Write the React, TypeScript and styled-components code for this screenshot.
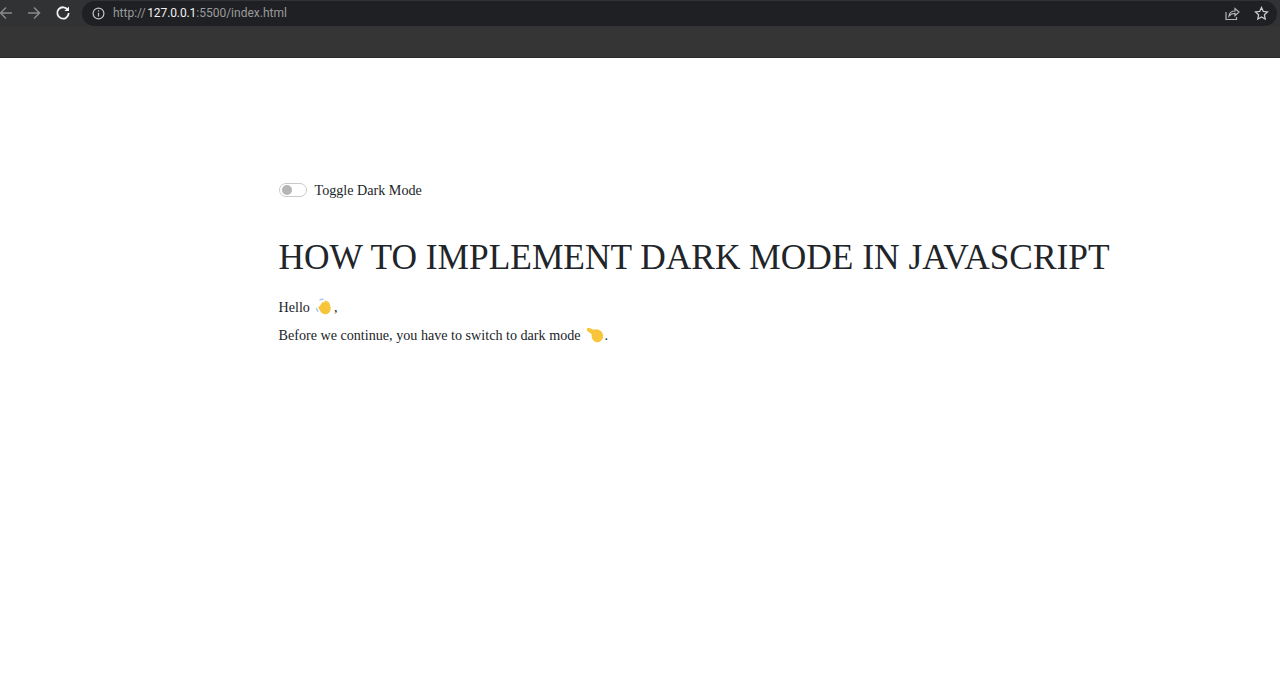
import React from "react";
import styled, { createGlobalStyle } from "styled-components";

const Global = createGlobalStyle`
  html, body { margin: 0; padding: 0; background: #fff; }
  body { font-family: "Liberation Serif", "Times New Roman", serif; color: #212529; overflow: hidden; }
`;

const Page = styled.div`
  width: 1280px;
  height: 675px;
  display: flex;
  flex-direction: column;
`;

const BrowserChrome = styled.header`
  height: 58px;
  flex: none;
  box-sizing: border-box;
  background: #353535;
  border-bottom: 1px solid #2a2a2a;
`;

const Toolbar = styled.div`
  height: 26px;
  display: flex;
  align-items: center;
  padding-right: 3px;
  background: #313234;
`;

const NavButton = styled.button<{ $w: number }>`
  width: ${(p) => p.$w}px;
  height: 26px;
  flex: none;
  border: 0;
  padding: 0;
  background: none;
  display: flex;
  align-items: center;
  justify-content: center;
`;

const AddressBar = styled.div`
  flex: 1;
  height: 25px;
  margin-left: 10px;
  padding: 0 8px 0 10px;
  display: flex;
  align-items: center;
  background: #1f2023;
  border-radius: 13px;
`;

const Url = styled.span`
  margin-left: 8px;
  font: 12px "Roboto", "Liberation Sans", sans-serif;
  color: #9a9b9d;
  flex: 1;
`;

const Host = styled.span`
  margin-left: 1.5px;
  letter-spacing: -0.1px;
  color: #f1f1f1;
`;

const BarIcons = styled.div`
  display: flex;
  align-items: center;
  gap: 14px;
`;

const Content = styled.main`
  flex: 1;
  padding: 123px 0 0 278.5px;
  font-size: 14.14px;
  line-height: 22px;
`;

const ToggleRow = styled.label`
  height: 17px;
  display: flex;
  align-items: center;
  gap: 8px;
`;

const Track = styled.span`
  width: 28px;
  height: 14px;
  box-sizing: border-box;
  padding-left: 2px;
  border: 1px solid #c9c9c9;
  border-radius: 8px;
  display: flex;
  align-items: center;
  background: #fff;
`;

const Knob = styled.span`
  width: 10px;
  height: 10px;
  border-radius: 50%;
  background: #b5b5b5;
`;

const Title = styled.h1`
  margin: 38px 0 0;
  font-size: 35.36px;
  font-weight: 400;
  line-height: 43px;
  white-space: nowrap;
`;

const Paragraph = styled.p<{ $top: number }>`
  margin: ${(p) => p.$top}px 0 0;
  height: 22px;
  display: flex;
  align-items: center;
  white-space: pre;
`;

const Emoji = styled.svg`
  width: 18px;
  height: 18px;
  margin: 0 1px 0 5px;
  flex: none;
`;

const WaveHand = () => (
  <Emoji viewBox="0 0 18 18">
    <path d="M1.500 10.500c.2 1 .7 1.900 1.500 2.700M5 1.800c.9-.5 2-.6 3-.3" stroke="#a9c8ea" strokeWidth="1.400" fill="none" strokeLinecap="round" />
    <path d="M4.500 8.500 7.300 4.300c.5-.8 1.500-.3 1.400.5L9.800 3c.5-.8 1.600-.3 1.400.6l.3-.3c.7-.5 1.500.1 1.300.9l.3-.1c.8-.2 1.200.5 1.100 1.200 1.100 1.900 1.800 4 1.400 6.200-.6 3.300-3 5.200-5.800 4.700-2.300-.3-3.900-1.700-4.900-3.700L3.500 9.800c-.5-.8.500-1.800 1-1.300z" fill="#f8c53a" />
  </Emoji>
);

const PointHand = () => (
  <Emoji viewBox="0 0 18 18">
    <path d="M.8 3.200C1.100 2 2.400 1.600 3.500 2.100L7.800 3.800c1.100-.7 2.500-.8 3.900-.4 2.100.6 3.800 1.700 4.700 3.500 1 2.100.9 4.500-.2 6.400-1.200 2.100-3.300 3.200-5.600 2.900-2.300-.3-4-1.900-4.700-4.100-.4-1.300-.4-2.600-.2-3.800L2 5.500C1.100 5.100.6 4.100.8 3.200z" fill="#f8c53a" />
  </Emoji>
);

export default function App() {
  return (
    <Page>
      <Global />
      <BrowserChrome>
        <Toolbar>
          <NavButton $w={14}>
            <svg width="14" height="14" viewBox="0 0 14 14" fill="none" stroke="#8a8b8d" strokeWidth="1.500" style={{ marginLeft: -3 }}>
              <path d="M13 7H1.500M7 1.500 1.500 7 7 12.500" />
            </svg>
          </NavButton>
          <NavButton $w={40}>
            <svg width="14" height="14" viewBox="0 0 14 14" fill="none" stroke="#8a8b8d" strokeWidth="1.500">
              <path d="M1 7h11.500M7 1.500 12.500 7 7 12.500" />
            </svg>
          </NavButton>
          <NavButton $w={18}>
            <svg width="16" height="16" viewBox="0 0 16 16" fill="none" stroke="#f4f4f4" strokeWidth="1.800">
              <path d="M13 5.200A5.700 5.700 0 1 0 13.700 8" />
              <path d="M14 1.500v4.600H9.400z" fill="#f4f4f4" stroke="none" />
            </svg>
          </NavButton>
          <AddressBar>
            <svg width="13" height="13" viewBox="0 0 13 13" fill="none" stroke="#c4c5c7" strokeWidth="1.200">
              <circle cx="6.500" cy="6.500" r="5.400" />
              <path d="M6.500 5.700v3.800M6.500 3.300v1.300" />
            </svg>
            <Url>
              http://<Host>127.0.0.1</Host>:5500/index.html
            </Url>
            <BarIcons>
              <svg width="15" height="15" viewBox="0 0 15 15" fill="none" stroke="#b4b5b7" strokeWidth="1.200">
                <path d="M1 6v7.500h10.500V11" />
                <path d="M4 10c.4-3 2.500-5 6-5V2.500L14 6l-4 3.700V7.400C7.500 7.400 5.500 8.200 4 10z" />
              </svg>
              <svg width="15" height="15" viewBox="0 0 15 15" fill="none" stroke="#c8c9cb" strokeWidth="1.300">
                <path d="m7.500 1.500 1.800 3.900 4.200.5-3.100 2.900.8 4.200-3.700-2.100L3.800 13l.8-4.200L1.500 5.900l4.200-.5z" />
              </svg>
            </BarIcons>
          </AddressBar>
        </Toolbar>
      </BrowserChrome>
      <Content>
        <ToggleRow>
          <Track>
            <Knob />
          </Track>
          Toggle Dark Mode
        </ToggleRow>
        <Title>HOW TO IMPLEMENT DARK MODE IN JAVASCRIPT</Title>
        <Paragraph $top={17}>
          Hello<WaveHand />,
        </Paragraph>
        <Paragraph $top={6}>
          Before we continue, you have to switch to dark mode<PointHand />.
        </Paragraph>
      </Content>
    </Page>
  );
}
